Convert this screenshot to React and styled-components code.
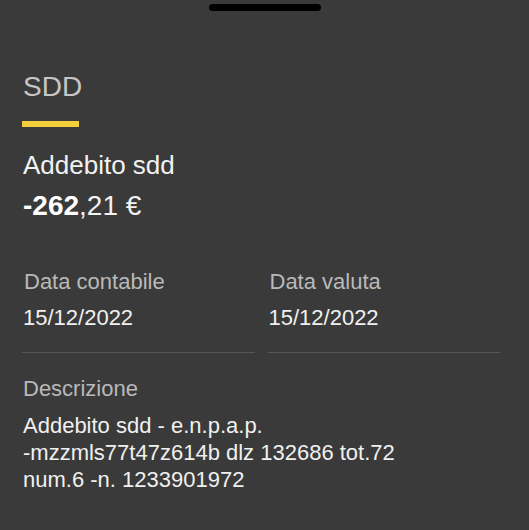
import React from "react";
import styled, { createGlobalStyle } from "styled-components";

const GlobalStyle = createGlobalStyle`
  html, body {
    margin: 0;
    padding: 0;
    background: #3a3a3a;
  }
  body {
    font-family: "Liberation Sans", Arial, sans-serif;
    -webkit-font-smoothing: antialiased;
  }
`;

const App = () => {
  return (
    <>
      <GlobalStyle />
      <Sheet>
        <Handle />
        <Body>
          <Title>SDD</Title>
          <Accent />
          <Name>Addebito sdd</Name>
          <Amount>
            <b>-262</b>,21 €
          </Amount>
          <Columns>
            <Field>
              <Label>Data contabile</Label>
              <Value>15/12/2022</Value>
            </Field>
            <Field>
              <Label>Data valuta</Label>
              <Value>15/12/2022</Value>
            </Field>
          </Columns>
          <Label $top={22}>Descrizione</Label>
          <Description>
            Addebito sdd - e.n.p.a.p.
            <br />
            -mzzmls77t47z614b dlz 132686 tot.72
            <br />
            num.6 -n. 1233901972
          </Description>
        </Body>
      </Sheet>
    </>
  );
};

const Sheet = styled.div`
  width: 529px;
  height: 530px;
  background: #3a3a3a;
  display: flex;
  flex-direction: column;
  overflow: hidden;
`;

const Handle = styled.div`
  width: 112px;
  height: 7px;
  border-radius: 4px;
  background: #000;
  margin: 4px auto 0;
`;

const Body = styled.div`
  padding: 59px 29px 0 22px;
  display: flex;
  flex-direction: column;
`;

const Title = styled.div`
  font-size: 28px;
  line-height: 34px;
  color: #c6c6c6;
  padding-left: 1px;
`;

const Accent = styled.div`
  width: 57px;
  height: 6px;
  background: #f4cf3c;
  margin-top: 17px;
`;

const Name = styled.div`
  font-size: 26px;
  line-height: 30px;
  color: #f2f2f2;
  margin-top: 23px;
  padding-left: 1px;
`;

const Amount = styled.div`
  font-size: 28px;
  line-height: 34px;
  color: #f2f2f2;
  margin-top: 9px;
  padding-left: 1px;
  b {
    font-weight: 700;
    color: #fff;
  }
`;

const Columns = styled.div`
  display: grid;
  grid-template-columns: 1fr 1fr;
  column-gap: 13px;
  margin-top: 45px;
`;

const Field = styled.div`
  display: flex;
  flex-direction: column;
  gap: 8px;
  padding: 0 0 20px 1px;
  border-bottom: 1px solid #565656;
`;

const Label = styled.div`
  font-size: 22px;
  line-height: 28px;
  color: #b9b9b9;
  margin-top: ${(p) => p.$top || 0}px;
  padding-left: 1px;
`;

const Value = styled.div`
  font-size: 22px;
  line-height: 28px;
  color: #f0f0f0;
`;

const Description = styled.div`
  font-size: 22px;
  line-height: 27px;
  color: #f0f0f0;
  margin-top: 9px;
  padding-left: 1px;
`;

export default App;
